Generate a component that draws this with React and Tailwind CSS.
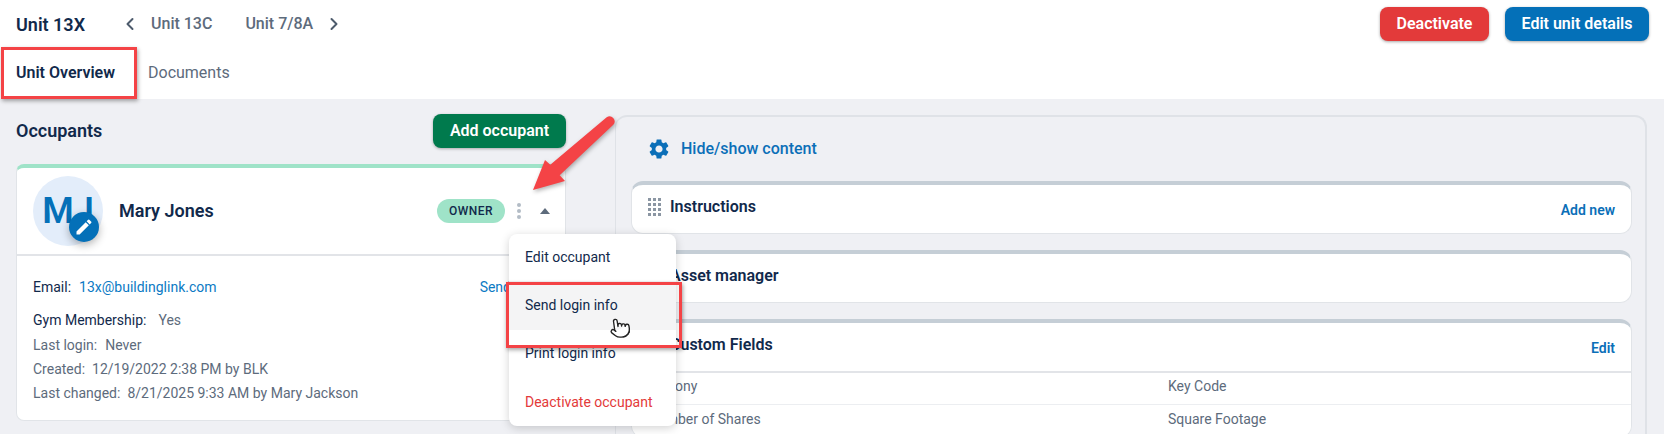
import React from "react";
import { ChevronLeft, ChevronRight, Pointer } from "lucide-react";
import { MdSettings, MdEdit } from "react-icons/md";

function Panel({ title, action, grid, children, className = "" }) {
  return (
    <div className={`bg-white rounded-xl border border-[#e1e4e8] border-t-4 border-t-[#c5ced6] ${className}`}>
      <div className="flex items-center justify-between h-[48px] pl-[16px] pr-[16px]">
        <div className="flex items-center -mt-[5px]">
          <div className="w-[22px]">
            {grid && (
              <div className="grid grid-cols-3 gap-[2px] w-[13px]">
                {Array.from({ length: 12 }).map((_, i) => (
                  <span key={i} className="w-[3px] h-[3px] bg-[#8b96a3]" />
                ))}
              </div>
            )}
          </div>
          <span className="text-[16px] font-semibold text-[#11294b]">{title}</span>
        </div>
        {action && <span className="text-[14px] font-semibold text-[#0b6fb8] mt-[2px]">{action}</span>}
      </div>
      {children}
    </div>
  );
}

function Row({ left, right, cls }) {
  return (
    <div className={`grid grid-cols-[520px_1fr] pl-[16px] text-[14px] text-[#5d6b7c] ${cls}`}>
      <span>{left}</span>
      <span>{right}</span>
    </div>
  );
}

export default function App() {
  return (
    <div className="relative h-[434px] w-[1664px] overflow-hidden bg-[#eff0f4] font-['Roboto',sans-serif] text-[#11294b]">
      <header className="bg-white h-[99px]">
        <div className="flex items-center justify-between h-[48px] pl-[16px] pr-[15px]">
          <div className="flex items-center">
            <span className="text-[18px] font-semibold w-[105px]">Unit 13X</span>
            <ChevronLeft className="w-[20px] h-[20px] text-[#4d5b6c] mr-[11px] -ml-[1px]" strokeWidth={2.4} />
            <span className="text-[16px] text-[#5d6b7c] font-medium">Unit 13C</span>
            <span className="text-[16px] text-[#5d6b7c] font-medium ml-[33px]">Unit 7/8A</span>
            <ChevronRight className="w-[20px] h-[20px] text-[#4d5b6c] ml-[11px]" strokeWidth={2.4} />
          </div>
          <div className="flex items-center gap-[16px]">
            <button className="h-[34px] w-[109px] rounded-lg bg-[#e33a3a] text-white font-semibold text-[16px] shadow-[0_1px_3px_rgba(0,0,0,0.35)]">
              Deactivate
            </button>
            <button className="h-[34px] w-[144px] rounded-lg bg-[#0470b8] text-white font-semibold text-[16px] shadow-[0_1px_3px_rgba(0,0,0,0.35)]">
              Edit unit details
            </button>
          </div>
        </div>
        <div className="flex items-center h-[50px] pl-[16px]">
          <span className="text-[16px] font-semibold w-[132px]">Unit Overview</span>
          <span className="text-[16px] text-[#5d6b7c]">Documents</span>
        </div>
      </header>

      <main className="flex">
        <section className="w-[550px] ml-[16px]">
          <div className="flex items-center justify-between h-[34px] mt-[15px]">
            <h2 className="text-[18px] font-semibold -mt-[1px]">Occupants</h2>
            <button className="h-[34px] w-[133px] rounded-lg bg-[#007a4d] text-white font-semibold text-[16px] shadow-[0_1px_3px_rgba(0,0,0,0.3)]">
              Add occupant
            </button>
          </div>
          <div className="mt-[16px] h-[257px] w-[550px] bg-white rounded-lg border border-[#e1e4e8] border-t-4 border-t-[#9fe3c8]">
            <div className="flex items-center h-[88px] border-b-2 border-[#e2e4e8] pl-[16px] pr-[15px]">
              <div className="relative w-[70px] h-[70px] rounded-full bg-[#e3edfa] flex items-center justify-center shrink-0">
                <span className="text-[36px] font-semibold text-[#0470b8] leading-none">MJ</span>
                <span className="absolute left-[36px] top-[36px] w-[30px] h-[30px] rounded-full bg-[#0470b8] flex items-center justify-center shadow-[0_3px_8px_rgba(0,0,0,0.3)]">
                  <MdEdit className="text-white w-[20px] h-[20px]" />
                </span>
              </div>
              <span className="ml-[16px] -mt-[2px] text-[18px] font-semibold">Mary Jones</span>
              <span className="ml-auto h-[24px] w-[68px] rounded-full bg-[#9fe3c8] flex items-center justify-center text-[12px] font-medium tracking-[0.5px]">
                OWNER
              </span>
              <span className="ml-[12px] -mt-[1px] flex flex-col gap-[2px] w-[4px]">
                <span className="w-[4px] h-[4px] rounded-full bg-[#b3bcc6]" />
                <span className="w-[4px] h-[4px] rounded-full bg-[#b3bcc6]" />
                <span className="w-[4px] h-[4px] rounded-full bg-[#b3bcc6]" />
              </span>
              <svg className="ml-[19px]" width="10" height="6" viewBox="0 0 10 6">
                <path d="M5 0 L10 6 L0 6 Z" fill="#5d6b7c" />
              </svg>
            </div>
            <div className="pl-[16px] pt-[19px] text-[14px] leading-[24px] text-[#5d6b7c]">
              <div className="flex justify-between h-[33px] pr-[54px]">
                <span>
                  <span className="text-[#11294b]">Email:</span>
                  <span className="ml-[8px] text-[#0b7ac4]">13x@buildinglink.com</span>
                </span>
                <span className="text-[#0b7ac4]">Send</span>
              </div>
              <div className="h-[25px]">
                <span className="text-[#11294b]">Gym Membership:</span>
                <span className="ml-[12px]">Yes</span>
              </div>
              <div className="h-[24px]">Last login:<span className="ml-[8px]">Never</span></div>
              <div className="h-[24px]">Created:<span className="ml-[7px]">12/19/2022 2:38 PM by BLK</span></div>
              <div className="h-[24px]">Last changed:<span className="ml-[7px]">8/21/2025 9:33 AM by Mary Jackson</span></div>
            </div>
          </div>
        </section>

        <section className="ml-[49px] mt-[16px] w-[1032px] h-[400px] rounded-xl border-r-2 border-t-2 border-l border-[#dfe2e7] pl-[15px] pr-[13px]">
          <div className="flex items-center h-[64px] pl-[16px] text-[#0b6fb8]">
            <MdSettings className="w-[24px] h-[24px]" />
            <span className="ml-[10px] text-[16px] font-medium">Hide/show content</span>
          </div>
          <div className="flex flex-col gap-[16px]">
            <Panel title="Instructions" action="Add new" grid />
            <Panel title="Asset manager" />
            <Panel title="Custom Fields" action="Edit">
              <Row left="Balcony" right="Key Code" cls="border-t-2 border-[#e2e4e8] h-[33px] items-center pb-[5px]" />
              <Row left="Number of Shares" right="Square Footage" cls="border-t border-[#eceef1] h-[33px] items-center pb-[3px]" />
            </Panel>
          </div>
        </section>
      </main>

      {/* Open dropdown menu */}
      <div className="absolute left-[509px] top-[234px] w-[167px] h-[192px] bg-white rounded-lg shadow-[0_2px_10px_rgba(0,0,0,0.18)] flex flex-col text-[14px]">
        <div className="h-[47px] flex items-center pl-[16px]">Edit occupant</div>
        <div className="h-[49px] flex items-center pl-[16px] bg-[#f4f4f5]">Send login info</div>
        <div className="h-[47px] flex items-center pl-[16px]">Print login info</div>
        <div className="h-[49px] flex items-center pl-[16px] pt-[2px] text-[#e33a3a]">Deactivate occupant</div>
      </div>

      {/* Annotations laid over the screenshot */}
      <div className="absolute left-[1px] top-[47px] w-[136px] h-[52px] border-[3px] border-[#f44346] shadow-[1px_2px_4px_rgba(0,0,0,0.35)]" />
      <div className="absolute left-[506px] top-[282px] w-[176px] h-[66px] border-[3px] border-[#f44346] shadow-[1px_2px_4px_rgba(0,0,0,0.35)]" />
      <svg className="absolute left-[525px] top-[110px] drop-shadow-[1px_2px_2px_rgba(0,0,0,0.3)]" width="100" height="90" viewBox="0 0 100 90">
        <path d="M81.7 7.3 A5 5 0 0 1 88.3 14.7 L34.7 65.2 L40 71 L8 80 L20 50 L25.3 54.8 Z" fill="#f44346" />
      </svg>
      <Pointer className="absolute left-[609px] top-[316px] w-[22px] h-[24px] rotate-[-8deg]" fill="white" stroke="#222" strokeWidth={1.5} />
    </div>
  );
}
